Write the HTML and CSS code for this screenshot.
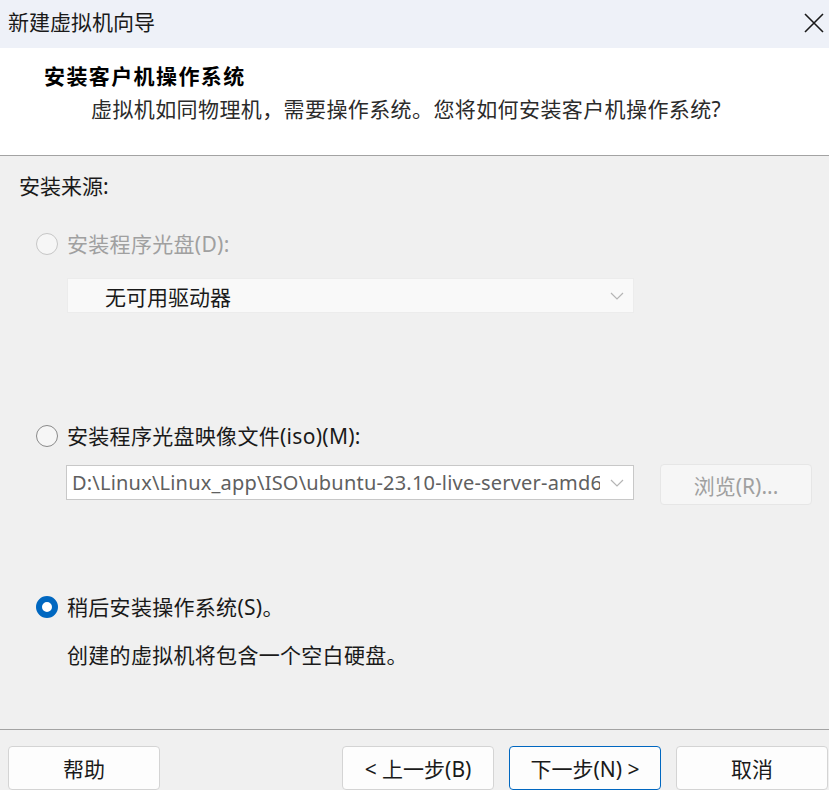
FILE: index.html
```html
<!DOCTYPE html>
<html>
	<head>
		<meta charset="utf-8">
		<title>新建虚拟机向导</title>
		<link rel="stylesheet" href="styles.css">
	</head>
	<body>
		<div class="dialog">
			<div class="titlebar">
				<span class="title">新建虚拟机向导</span>
				<span class="close">
					<svg width="22" height="22" viewBox="0 0 22 22"><path d="M2 2 L20 20 M20 2 L2 20" stroke="#1a1a1a" stroke-width="1.6" fill="none"/></svg>
				</span>
			</div>

			<div class="header">
				<h1>安装客户机操作系统</h1>
				<p>虚拟机如同物理机，需要操作系统。您将如何安装客户机操作系统?</p>
			</div>

			<div class="main">
				<div class="source">安装来源:</div>

				<div class="option disabled first">
					<span class="radio"></span>
					<span>安装程序光盘(D):</span>
				</div>
				<div class="select disabled-select">
					<span>无可用驱动器</span>
					<svg class="chevron" width="14" height="8" viewBox="0 0 14 8"><path d="M1 1 L7 7 L13 1" stroke="#b5b5b5" stroke-width="1.2" fill="none"/></svg>
				</div>

				<div class="option second">
					<span class="radio"></span>
					<span>安装程序光盘映像文件(iso)(M):</span>
				</div>
				<div class="iso-row">
					<div class="select iso">
						<span class="path">D:\Linux\Linux_app\ISO\ubuntu-23.10-live-server-amd64.iso</span>
						<svg class="chevron" width="14" height="8" viewBox="0 0 14 8"><path d="M1 1 L7 7 L13 1" stroke="#b5b5b5" stroke-width="1.2" fill="none"/></svg>
					</div>
					<div class="btn browse">浏览(R)...</div>
				</div>

				<div class="option third">
					<span class="radio checked"></span>
					<span>稍后安装操作系统(S)。</span>
				</div>
				<div class="note">创建的虚拟机将包含一个空白硬盘。</div>
			</div>

			<div class="footer">
				<div class="btn">帮助</div>
				<div class="nav">
					<div class="btn">&lt; 上一步(B)</div>
					<div class="btn primary">下一步(N) &gt;</div>
					<div class="btn">取消</div>
				</div>
			</div>
		</div>
	</body>
</html>
```

FILE: styles.css
```css
* {
	margin: 0;
	padding: 0;
	box-sizing: border-box;
}

body {
	font-family: "Noto Sans", "Noto Sans CJK SC", sans-serif;
	font-size: 21px;
	color: #1a1a1a;
	background-color: #f0f0f0;
	overflow: hidden;
}

.dialog {
	width: 829px;
	height: 790px;
	overflow: hidden;
}

.titlebar {
	height: 48px;
	background-color: #eef1f8;
	display: flex;
	align-items: center;
	justify-content: space-between;
	padding: 0 4px 0 8px;
}

.title {
	line-height: 28px;
	margin-top: -4px;
}

.close {
	display: flex;
	margin-top: -3px;
}

.header {
	height: 108px;
	background-color: #fff;
	border-bottom: 1px solid #a3a3a3;
	padding: 13px 0 0 44px;
}

.header h1 {
	font-size: 21px;
	font-weight: bold;
	line-height: 30px;
	color: #000;
	letter-spacing: 1.4px;
}

.header p {
	margin: 3px 0 0 47px;
	line-height: 30px;
	color: #2b2b2b;
	letter-spacing: 0.4px;
}

.main {
	height: 574px;
	border-bottom: 1px solid #a3a3a3;
	padding: 16px 0 0 19px;
}

.source {
	line-height: 28px;
}

.option {
	display: flex;
	align-items: center;
	gap: 9px;
	line-height: 28px;
	margin-left: 17px;
	letter-spacing: 0.3px;
}

.option.first {
	margin-top: 30px;
}

.option.second {
	margin-top: 109px;
}

.option.third {
	margin-top: 88px;
}

.option.disabled {
	color: #a0a0a0;
}

.radio {
	width: 22px;
	height: 22px;
	border-radius: 50%;
	border: 1px solid #8a8a8a;
	background-color: #f6f6f6;
	flex-shrink: 0;
}

.option.disabled .radio {
	border-color: #c6c6c6;
}

.radio.checked {
	border: 6px solid #0067c0;
	background-color: #fff;
}

.select {
	margin: 20px 0 0 48px;
	width: 567px;
	height: 35px;
	display: flex;
	align-items: center;
	justify-content: space-between;
	padding: 0 9px 0 37px;
	background-color: #f9f9f9;
	border: 1px solid #ececec;
}

.select .chevron {
	flex-shrink: 0;
}

.iso-row {
	display: flex;
	align-items: flex-start;
	gap: 26px;
	margin: 14px 0 0 47px;
	height: 41px;
}

.select.iso {
	margin: 1px 0 0 0;
	width: 568px;
	padding: 0 9px 0 5px;
	background-color: #fff;
	border-color: #c8c8c8;
}

.path {
	width: 528px;
	overflow: hidden;
	white-space: nowrap;
	color: #606060;
	font-size: 20px;
	letter-spacing: 0.2px;
}

.btn {
	width: 152px;
	height: 44px;
	border: 1px solid #d4d4d4;
	border-radius: 4px;
	background-color: #fdfdfd;
	display: flex;
	align-items: center;
	justify-content: center;
}

.btn.browse {
	height: 41px;
	color: #a0a0a0;
	background-color: #f6f6f6;
	border-color: #e6e6e6;
}

.note {
	margin: 20px 0 0 48px;
	line-height: 28px;
	letter-spacing: 0.3px;
}

.footer {
	display: flex;
	justify-content: space-between;
	padding: 16px 1px 0 8px;
}

.nav {
	display: flex;
	gap: 15px;
}

.btn.primary {
	border-color: #0067c0;
}
```
